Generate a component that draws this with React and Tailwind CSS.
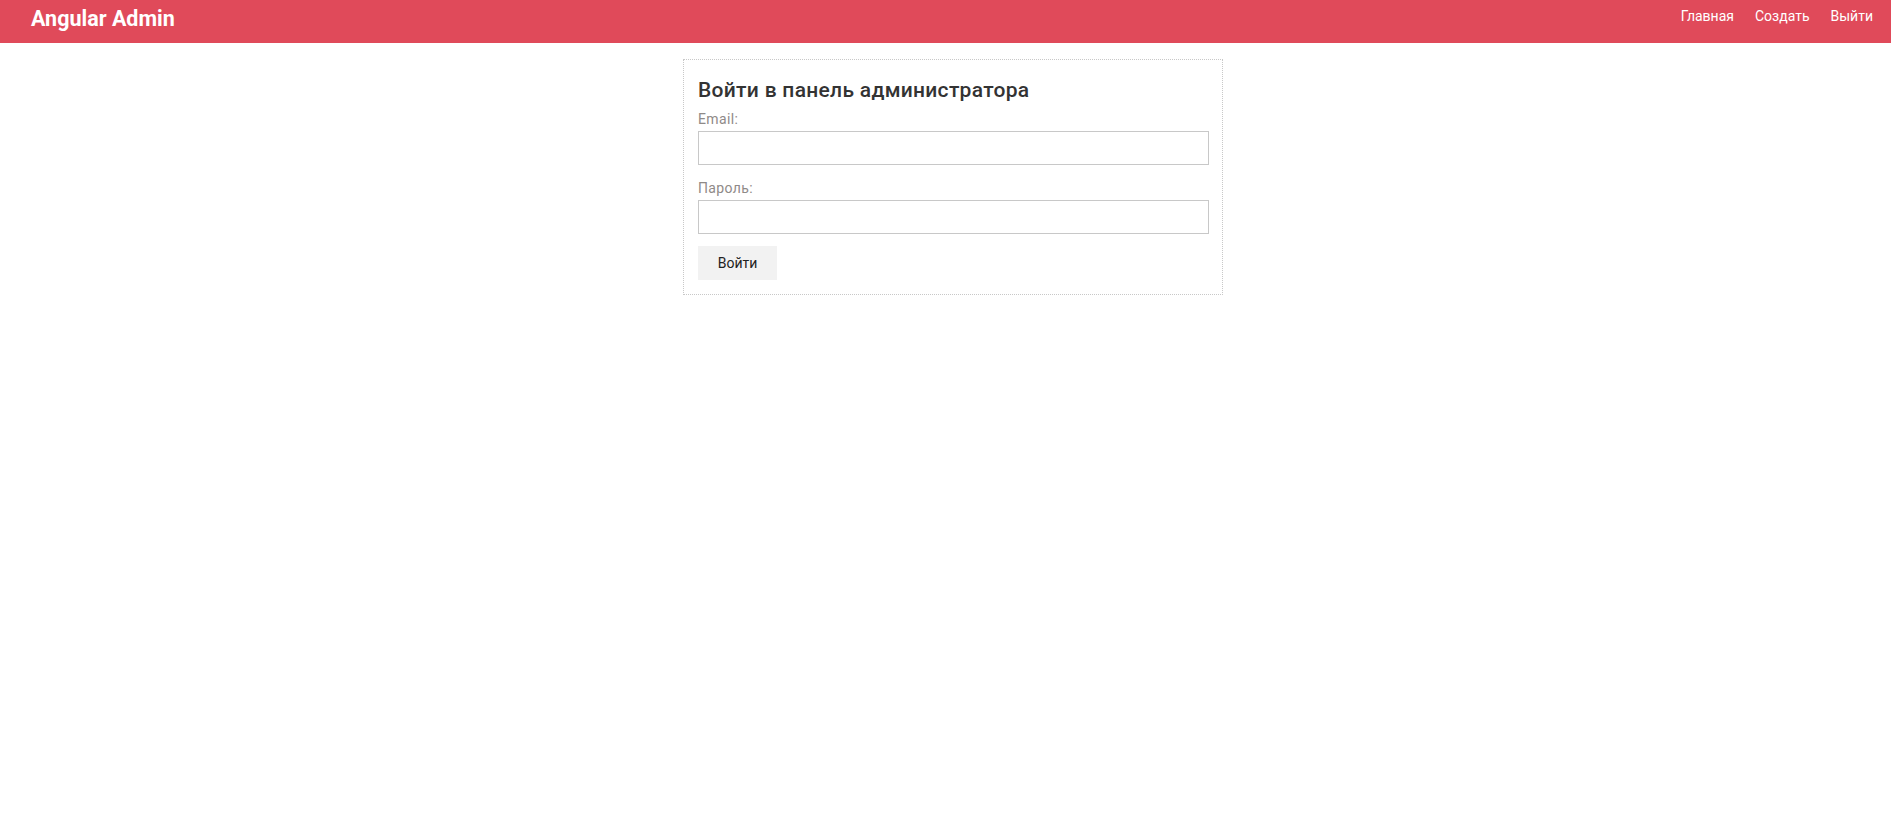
import React from "react";

export default function App() {
  return (
    <div className="min-h-screen bg-white" style={{ fontFamily: "Roboto, 'Noto Sans', sans-serif" }}>
      <header className="h-[43px] bg-[#e04a5a] flex items-start justify-between pl-[31px] pr-[18px]">
        <div className="pt-[6px] text-[21.5px] leading-[26px] font-bold text-white">Angular Admin</div>
        <nav className="flex gap-[21px] pt-[6px] text-[14px] leading-[20px] text-white">
          <a href="#" className="text-white">Главная</a>
          <a href="#" className="text-white">Создать</a>
          <a href="#" className="text-white">Выйти</a>
        </nav>
      </header>
      <div className="flex justify-center pl-[15px] pt-[16px]">
        <form className="w-[540px] border border-dotted border-[#c8c8c8] pt-[18px] pb-[14px] pl-[14px] pr-[13px]" onSubmit={(e) => e.preventDefault()}>
          <h2 className="text-[21px] leading-[24px] font-medium tracking-[0.3px] text-[#333]">Войти в панель администратора</h2>
          <div className="mt-[9px]">
            <label className="block text-[14px] leading-[16px] tracking-[0.35px] text-[#8f8a88]">Email:</label>
            <input type="email" className="mt-[4px] block w-full h-[34px] border border-[#c8c8c8] outline-none px-2 text-[14px]" />
          </div>
          <div className="mt-[15px]">
            <label className="block text-[14px] leading-[16px] tracking-[0.35px] text-[#8f8a88]">Пароль:</label>
            <input type="password" className="mt-[4px] block w-full h-[34px] border border-[#c8c8c8] outline-none px-2 text-[14px]" />
          </div>
          <button type="submit" className="mt-[12px] block w-[79px] h-[34px] bg-[#f2f2f2] text-[14px] text-[#222]">Войти</button>
        </form>
      </div>
    </div>
  );
}
